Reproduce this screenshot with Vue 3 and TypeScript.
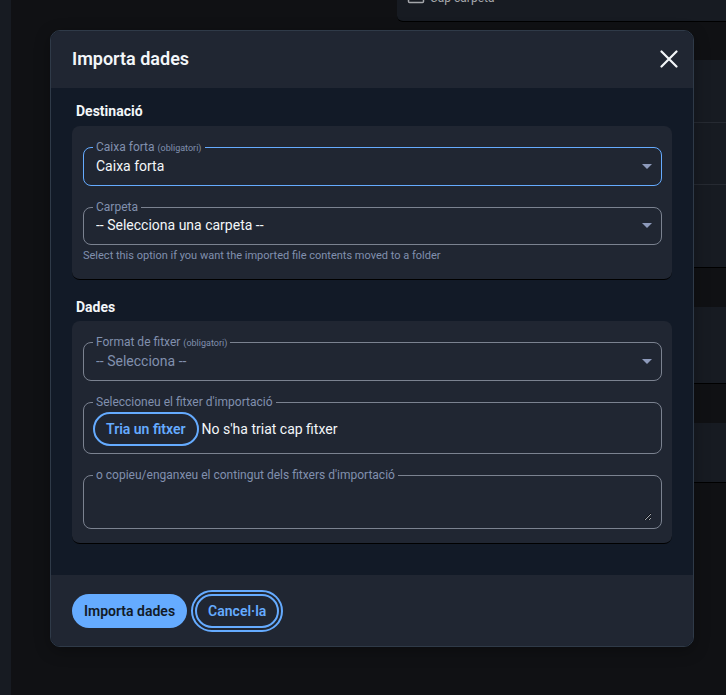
<script setup lang="ts">
import { ref } from 'vue'

const vault = ref('vault')
const folder = ref('')
const format = ref('')
const contents = ref('')
const fileName = ref("No s'ha triat cap fitxer")
const fileInput = ref<HTMLInputElement | null>(null)

function chooseFile(): void {
  fileInput.value?.click()
}

function onFile(event: Event): void {
  const file = (event.target as HTMLInputElement).files?.[0]
  if (file) fileName.value = file.name
}
</script>

<template>
  <div class="page">
    <aside class="sidebar"></aside>
    <div class="backdrop">
      <section class="panel panel-top">
        <svg class="folder" viewBox="0 0 18 14" aria-hidden="true">
          <path d="M1.5 2.5a1 1 0 0 1 1-1h4l2 2h7a1 1 0 0 1 1 1v7a1 1 0 0 1-1 1h-13a1 1 0 0 1-1-1z" />
        </svg>
        <span>Cap carpeta</span>
      </section>
      <section class="panel panel-rows">
        <div class="row"></div>
        <div class="row"></div>
        <div class="row row-last"></div>
      </section>
      <section class="panel panel-middle"></section>
      <section class="panel panel-short"></section>
    </div>

    <div class="overlay">
      <form class="modal" role="dialog" aria-labelledby="title" @submit.prevent>
        <header class="modal-header">
          <h1 id="title">Importa dades</h1>
          <button class="close" type="button">
            <svg viewBox="0 0 18 18" aria-hidden="true">
              <path d="M1.5 1.5l15 15M16.5 1.5l-15 15" />
            </svg>
          </button>
        </header>

        <div class="modal-body">
          <h2>Destinació</h2>
          <div class="card card-destination">
            <fieldset class="field active">
              <legend><label for="vault">Caixa forta <small>(obligatori)</small></label></legend>
              <div class="select">
                <select id="vault" v-model="vault">
                  <option value="vault">Caixa forta</option>
                </select>
                <svg viewBox="0 0 10 5" aria-hidden="true"><path d="M0 0h10L5 5z" /></svg>
              </div>
            </fieldset>
            <div>
              <fieldset class="field">
                <legend><label for="folder">Carpeta</label></legend>
                <div class="select">
                  <select id="folder" v-model="folder" aria-describedby="folder-hint">
                    <option value="">-- Selecciona una carpeta --</option>
                  </select>
                  <svg viewBox="0 0 10 5" aria-hidden="true"><path d="M0 0h10L5 5z" /></svg>
                </div>
              </fieldset>
              <p id="folder-hint" class="hint">
                Select this option if you want the imported file contents moved to a folder
              </p>
            </div>
          </div>

          <h2>Dades</h2>
          <div class="card card-data">
            <fieldset class="field">
              <legend><label for="format">Format de fitxer <small>(obligatori)</small></label></legend>
              <div class="select">
                <select id="format" v-model="format" class="empty">
                  <option value="">-- Selecciona --</option>
                </select>
                <svg viewBox="0 0 10 5" aria-hidden="true"><path d="M0 0h10L5 5z" /></svg>
              </div>
            </fieldset>
            <fieldset class="field">
              <legend><label for="file">Seleccioneu el fitxer d'importació</label></legend>
              <div class="file">
                <button class="button outlined" type="button" @click="chooseFile">Tria un fitxer</button>
                <span>{{ fileName }}</span>
                <input id="file" ref="fileInput" type="file" hidden @change="onFile" />
              </div>
            </fieldset>
            <fieldset class="field">
              <legend><label for="contents">o copieu/enganxeu el contingut dels fitxers d'importació</label></legend>
              <textarea id="contents" v-model="contents"></textarea>
            </fieldset>
          </div>
        </div>

        <footer class="modal-footer">
          <button class="button filled" type="submit">Importa dades</button>
          <button class="button outlined ringed" type="button">Cancel·la</button>
        </footer>
      </form>
    </div>
  </div>
</template>

<style>
body {
  margin: 0;
  background: #101114;
}
</style>

<style scoped>
* {
  box-sizing: border-box;
}

.page {
  display: flex;
  min-height: 100vh;
  overflow: hidden;
  color: #f3f6f9;
  font: 14px/20px Roboto, sans-serif;
}

.sidebar {
  width: 11px;
  background: #171b22;
}

.backdrop {
  flex: 1;
  padding-left: 386px;
}

.panel {
  margin-bottom: 39px;
  border-bottom: 1px solid #000;
  border-radius: 6px 0 0 6px;
  background: #171b22;
}

.panel-top {
  display: flex;
  align-items: flex-end;
  gap: 5px;
  height: 22px;
  margin-bottom: 38px;
  padding: 0 10px 13px;
  overflow: hidden;
  border-radius: 0 0 0 6px;
  color: #a4a6aa;
  font-size: 12px;
}

.panel-top span {
  line-height: 20px;
}

.folder {
  width: 18px;
  height: 14px;
  margin-bottom: 4px;
  fill: none;
  stroke: #a4a6aa;
  stroke-width: 1.5;
}

.row {
  height: 62px;
  border-bottom: 1px solid #262a32;
}

.row:first-child {
  height: 63px;
}

.row-last {
  height: 82px;
  border-bottom: 0;
}

.panel-middle {
  height: 77px;
}

.panel-short {
  height: 60px;
}

.overlay {
  position: absolute;
  inset: 0;
  padding: 30px 32px 0 50px;
}

.modal {
  overflow: hidden;
  border: 1px solid #2f3a48;
  border-radius: 10px;
  background: #121a27;
  box-shadow: 0 4px 16px rgb(0 0 0 / 30%);
}

.modal-header {
  display: flex;
  align-items: center;
  justify-content: space-between;
  height: 57px;
  padding: 0 15px 2px 21px;
  background: #202632;
}

h1 {
  margin: 0;
  font-size: 18px;
  font-weight: 600;
  line-height: 24px;
}

h2 {
  margin: 0;
  padding: 0 4px;
  font-size: 14px;
  font-weight: 700;
  line-height: 20px;
}

.close {
  display: flex;
  padding: 0;
  border: 0;
  background: none;
}

.close svg {
  width: 18px;
  height: 18px;
  fill: none;
  stroke: #f3f6f9;
  stroke-width: 2.2;
  stroke-linecap: round;
}

.modal-body {
  padding: 13px 21px 31px;
}

.card {
  display: flex;
  flex-direction: column;
  gap: 12px;
  padding: 12px 10px 14px 11px;
  border-bottom: 1px solid #000;
  border-radius: 8px;
  background: #202632;
}

.card-destination {
  margin: 5px 0 17px;
}

.card-data {
  margin-top: 4px;
}

.field {
  min-width: 0;
  margin: 0;
  padding: 0 9px 7px;
  border: 1px solid #7b8290;
  border-radius: 8px;
}

.field.active {
  border-color: #65abff;
}

legend {
  padding: 0 3px;
  color: #8190ae;
  font-size: 12px;
  line-height: 18px;
}

legend label {
  display: block;
}

small {
  font-size: 9px;
}

.select {
  display: grid;
  align-items: center;
  padding-bottom: 3px;
}

.select select,
.select svg {
  grid-area: 1 / 1;
}

select {
  width: 100%;
  height: 18px;
  padding: 0 24px 0 3px;
  border: 0;
  outline: 0;
  appearance: none;
  background: transparent;
  color: #f3f6f9;
  font: inherit;
  line-height: 18px;
}

select.empty {
  color: #8190ae;
}

.select svg {
  width: 10px;
  height: 5px;
  justify-self: end;
  fill: #8d9abb;
  pointer-events: none;
}

.hint {
  margin: 2px 0 0;
  color: #8190ae;
  font-size: 11px;
  line-height: 18px;
}

.file {
  display: flex;
  align-items: center;
  gap: 3px;
  padding-top: 1px;
}

.button {
  height: 34px;
  padding: 0 12px;
  border: 0;
  border-radius: 18px;
  font: 600 14px/20px Roboto, sans-serif;
}

.filled {
  background: #65abff;
  color: #121a27;
}

.outlined {
  padding: 0 11px;
  border: 2px solid #65abff;
  background: transparent;
  color: #65abff;
}

.ringed {
  outline: 2px solid #65abff;
  outline-offset: 2px;
}

textarea {
  display: block;
  width: 100%;
  height: 37px;
  padding: 0 3px;
  border: 0;
  outline: 0;
  background: transparent;
  color: #f3f6f9;
  font: inherit;
  resize: vertical;
}

.modal-footer {
  display: flex;
  gap: 8px;
  padding: 19px 21px 18px;
  background: #202632;
}
</style>
